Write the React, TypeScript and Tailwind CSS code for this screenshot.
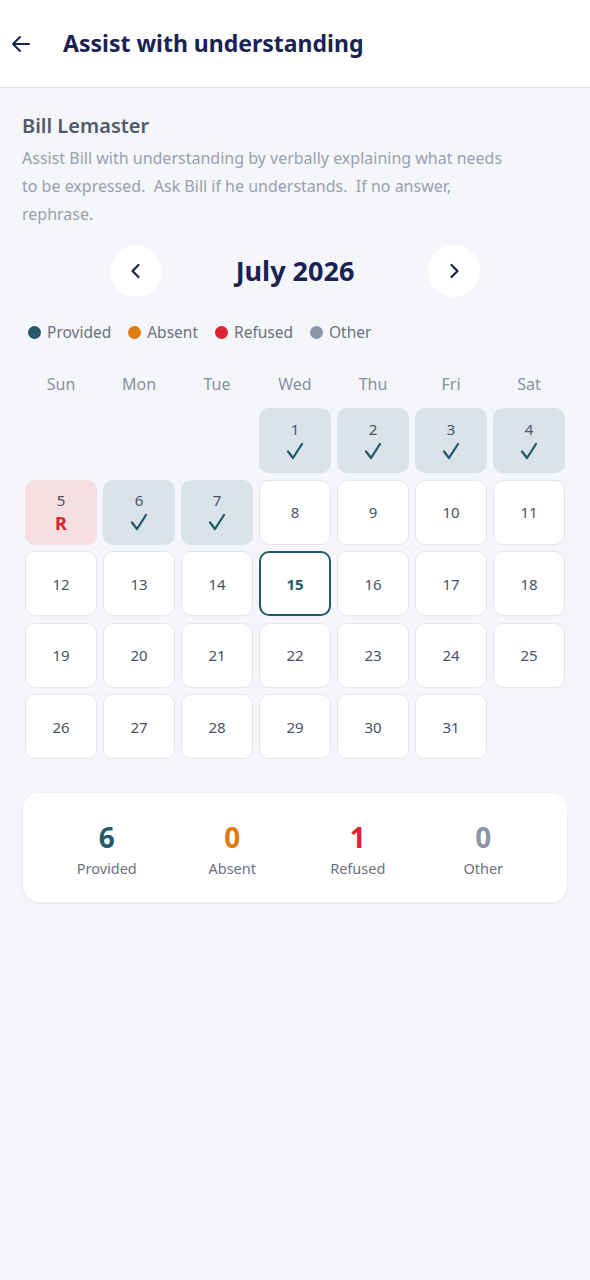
import React from "react";

type Status = "provided" | "refused" | null;

const statusMap: Record<number, Status> = {
  1: "provided",
  2: "provided",
  3: "provided",
  4: "provided",
  5: "refused",
  6: "provided",
  7: "provided",
};

function Check() {
  return (
    <svg width="20" height="20" viewBox="0 0 20 20" fill="none">
      <path d="M3 10.5 L8 17 L17 3" stroke="#235a6b" strokeWidth="2.3" strokeLinecap="round" strokeLinejoin="round" />
    </svg>
  );
}

function DayCell({ day }: { day: number }) {
  const s = statusMap[day] ?? null;
  if (s === "provided") {
    return (
      <div className="h-[65px] rounded-[10px] bg-[#dae2ea] flex flex-col items-center justify-center gap-[2px] pb-[2px]">
        <span className="text-[15px] leading-[20px] text-[#4b5366]">{day}</span>
        <Check />
      </div>
    );
  }
  if (s === "refused") {
    return (
      <div className="h-[65px] rounded-[10px] bg-[#f5dfe2] flex flex-col items-center justify-center gap-[2px]">
        <span className="text-[15px] leading-[20px] text-[#4b5366]">{day}</span>
        <span className="text-[18px] leading-[22px] font-bold text-[#d9232d]">R</span>
      </div>
    );
  }
  if (day === 15) {
    return (
      <div className="h-[65px] rounded-[10px] bg-white border-2 border-[#22596b] flex items-center justify-center">
        <span className="text-[15px] font-bold text-[#22596b]">{day}</span>
      </div>
    );
  }
  return (
    <div className="h-[65px] rounded-[10px] bg-white border border-[#e3e6ec] flex items-center justify-center">
      <span className="text-[15px] text-[#4b5366]">{day}</span>
    </div>
  );
}

export default function App() {
  const cells: (number | null)[] = [null, null, null];
  for (let d = 1; d <= 31; d++) cells.push(d);
  const days = ["Sun", "Mon", "Tue", "Wed", "Thu", "Fri", "Sat"];
  const legend = [
    { label: "Provided", color: "bg-[#235a6e]" },
    { label: "Absent", color: "bg-[#de7c0c]" },
    { label: "Refused", color: "bg-[#dc2330]" },
    { label: "Other", color: "bg-[#8d95a6]" },
  ];
  const stats = [
    { n: "6", label: "Provided", color: "text-[#235a6e]" },
    { n: "0", label: "Absent", color: "text-[#de7c0c]" },
    { n: "1", label: "Refused", color: "text-[#dc2330]" },
    { n: "0", label: "Other", color: "text-[#8d95a6]" },
  ];
  return (
    <div className="min-h-[1280px] bg-[#f4f6fa]" style={{ fontFamily: '"Noto Sans", "Open Sans", sans-serif' }}>
      <header className="h-[88px] bg-white border-b border-[#dcdfe5] flex items-center pl-[9px]">
        <svg width="24" height="24" viewBox="0 0 24 24" fill="none">
          <path d="M20 12 H4 M11 5 L4 12 L11 19" stroke="#1c2350" strokeWidth="2" strokeLinecap="round" strokeLinejoin="round" />
        </svg>
        <h1 className="ml-[30px] text-[23px] font-bold text-[#1a2252]">Assist with understanding</h1>
      </header>

      <div className="px-[22px] pt-[24px]">
        <div className="text-[20px] font-semibold text-[#535a6d] leading-[28px]">Bill Lemaster</div>
        <p className="mt-[4px] max-w-[490px] text-[16px] leading-[28px] text-[#9aa0ae]">
          Assist Bill with understanding by verbally explaining what needs to be expressed.&nbsp; Ask Bill if he understands.&nbsp; If no answer, rephrase.
        </p>

        <div className="mt-[17px] flex items-center justify-center gap-[59px]">
          <button className="w-[52px] h-[52px] rounded-full bg-white flex items-center justify-center">
            <svg width="20" height="20" viewBox="0 0 20 20" fill="none">
              <path d="M12.5 4 L6.5 10 L12.5 16" stroke="#1a2252" strokeWidth="2.2" strokeLinecap="round" strokeLinejoin="round" />
            </svg>
          </button>
          <div className="text-[27px] font-bold text-[#1a2252] w-[148px] text-center">July 2026</div>
          <button className="w-[52px] h-[52px] rounded-full bg-white flex items-center justify-center">
            <svg width="20" height="20" viewBox="0 0 20 20" fill="none">
              <path d="M7.5 4 L13.5 10 L7.5 16" stroke="#1a2252" strokeWidth="2.2" strokeLinecap="round" strokeLinejoin="round" />
            </svg>
          </button>
        </div>

        <div className="mt-[24px] flex items-center gap-[17px] pl-[6px]">
          {legend.map((l) => (
            <div key={l.label} className="flex items-center gap-[6px]">
              <span className={`w-[13px] h-[13px] rounded-full ${l.color}`} />
              <span className="text-[15.5px] text-[#6b7283]">{l.label}</span>
            </div>
          ))}
        </div>

        <div className="mt-[28px] mx-[3px] grid grid-cols-7 gap-x-[6px]">
          {days.map((d) => (
            <div key={d} className="text-center text-[16px] text-[#8a91a0] leading-[24px]">{d}</div>
          ))}
        </div>

        <div className="mt-[12px] mx-[3px] grid grid-cols-7 gap-x-[6px] gap-y-[6.5px]">
          {cells.map((c, i) => (c === null ? <div key={"e" + i} /> : <DayCell key={c} day={c} />))}
        </div>

        <div className="mt-[34px] mx-[1px] bg-white rounded-[16px] shadow-[0_1px_4px_rgba(30,40,70,0.06)] grid grid-cols-4 h-[109px] px-[21px] items-center">
          {stats.map((s, i) => (
            <div key={i} className="flex flex-col items-center pt-[4px]">
              <span className={`text-[28px] font-bold leading-[34px] ${s.color}`}>{s.n}</span>
              <span className="text-[14.5px] text-[#6b7283] leading-[22px] mt-[3px]">{s.label}</span>
            </div>
          ))}
        </div>
      </div>
    </div>
  );
}
